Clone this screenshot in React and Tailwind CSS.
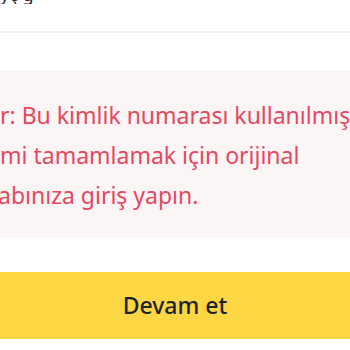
export default function App() {
  return (
    <div className="w-[350px] h-[350px] overflow-hidden bg-white" style={{ fontFamily: '"Noto Sans", "Open Sans", sans-serif' }}>
      <div className="h-[4px] overflow-hidden">
        <div className="-mt-[15px] text-[18px] leading-[18px] text-[#1e2329] whitespace-nowrap">yç ğ</div>
      </div>
      <div className="h-[27px]" />
      <div className="h-[2px] bg-[#eeeff1]" />
      <div className="h-[37px]" />
      <div className="h-[168px] bg-[#fcf5f6] pt-[25px] overflow-hidden">
        <div className="text-[23px] leading-[40px] text-[#e4485f] whitespace-nowrap">
          <div>r: Bu kimlik numarası kullanılmış</div>
          <div>mi tamamlamak için orijinal</div>
          <div className="-ml-[2px]">abınıza giriş yapın.</div>
        </div>
      </div>
      <div className="h-[34px]" />
      <div className="h-[67px] bg-[#fdd644] flex items-center justify-center">
        <span className="text-[23px] font-medium text-[#1e2329]">Devam et</span>
      </div>
    </div>
  );
}
